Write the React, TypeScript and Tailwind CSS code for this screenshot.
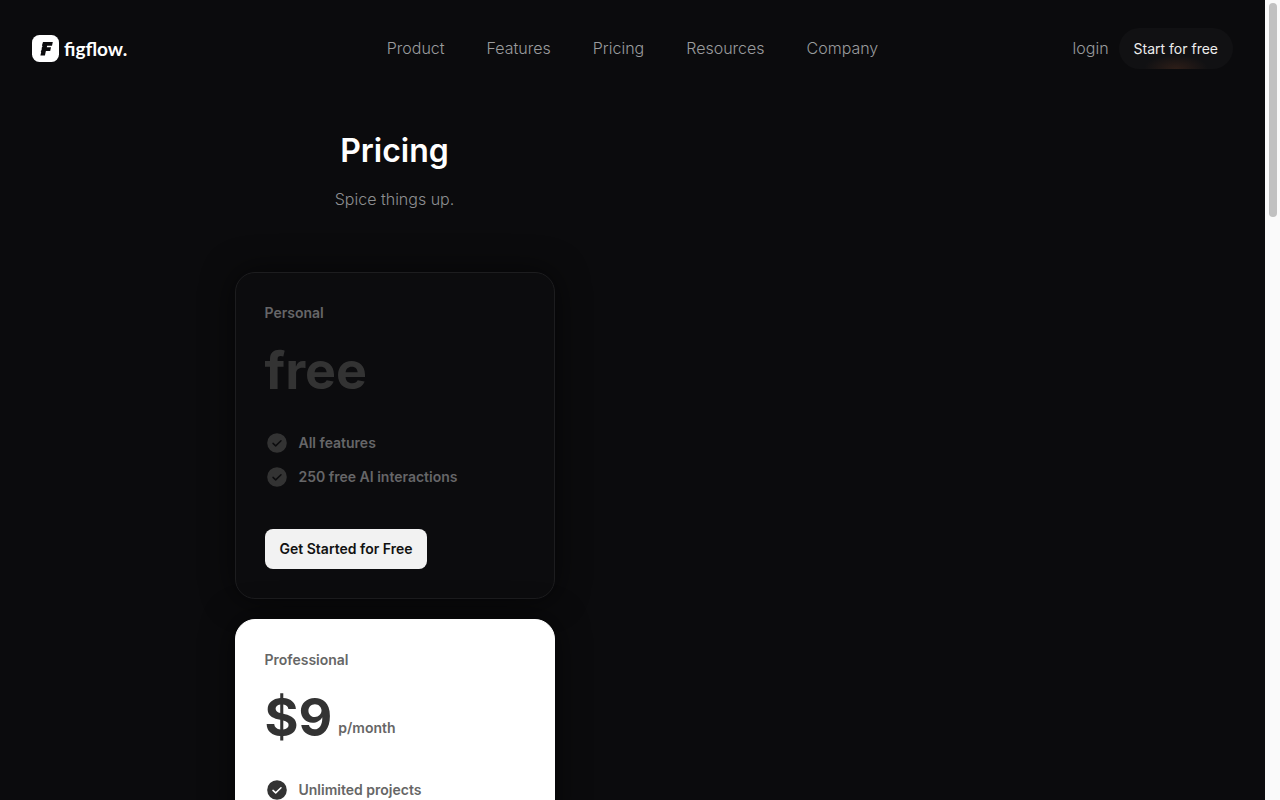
import React from 'react';

const navLinks = ['Product', 'Features', 'Pricing', 'Resources', 'Company'];

interface Plan {
  name: string;
  price: string;
  period?: string;
  features: string[];
  cta?: string;
  featured?: boolean;
}

const plans: Plan[] = [
  {
    name: 'Personal',
    price: 'free',
    features: ['All features', '250 free AI interactions'],
    cta: 'Get Started for Free',
  },
  {
    name: 'Professional',
    price: '$9',
    period: 'p/month',
    features: ['Unlimited projects'],
    featured: true,
  },
];

const Logo = () => (
  <a href="#" className="flex items-center gap-1 text-white">
    <svg width="28" height="28" viewBox="0 0 28 28" aria-hidden="true">
      <rect width="27" height="27" rx="7.5" fill="#fff" />
      <path
        d="M11 7H20.8L20 10.8H15.1L14.8 12.3H19L18.2 16H13.9L12.9 20.5H8.4L9.2 16.9L8.7 16.2L9.6 15L9.8 12.4L10.5 11.4L10 10.2Z"
        fill="#0b0b0d"
      />
    </svg>
    <span className="font-[Lato,sans-serif] text-[19px] font-bold leading-7">figflow.</span>
  </a>
);

const CheckIcon = ({ featured }: { featured?: boolean }) => (
  <svg width="24" height="24" viewBox="0 0 24 24" fill="none" aria-hidden="true" className="shrink-0">
    <circle cx="12" cy="12" r="9.8" fill="#333333" />
    <path
      d="M8 12.4L10.7 14.9L16 9.8"
      stroke={featured ? '#ffffff' : '#0c0c0e'}
      strokeWidth="1.5"
      strokeLinecap="round"
      strokeLinejoin="round"
    />
  </svg>
);

const Header = () => (
  <header className="grid grid-cols-[1fr_auto_1fr] items-center px-8 py-7">
    <Logo />
    <nav className="flex gap-[42px] pb-0.5">
      {navLinks.map((link) => (
        <a key={link} href="#" className="text-base font-light text-[#9a9b9d]">
          {link}
        </a>
      ))}
    </nav>
    <div className="flex items-center justify-end gap-2.5">
      <a href="#" className="pb-0.5 text-base font-light text-[#9a9b9d]">
        login
      </a>
      <button
        type="button"
        className="h-[41px] rounded-full bg-[#111113] bg-[radial-gradient(ellipse_32px_14px_at_50%_100%,#2e1e18,transparent)] px-[15px] text-sm text-[#ededed]"
      >
        Start for free
      </button>
    </div>
  </header>
);

const PlanCard = ({ plan }: { plan: Plan }) => (
  <article
    className={`rounded-[20px] border px-[29px] pt-[30px] pb-[29px] text-sm font-semibold shadow-[0_0_32px_rgba(0,0,0,0.6)] ${
      plan.featured
        ? 'border-white bg-white text-[#666666]'
        : 'border-[#1d1d1f] bg-[#0c0c0e] text-[#666668]'
    }`}
  >
    <h2 className="leading-5">{plan.name}</h2>
    <div className="mt-4 flex items-end gap-1.5">
      <span className="text-[52px] font-bold leading-[64px] text-[#333333]">{plan.price}</span>
      {plan.period && <span className="pb-3 leading-5">{plan.period}</span>}
    </div>
    <ul className="mt-7 flex flex-col gap-2.5">
      {plan.features.map((feature) => (
        <li key={feature} className="flex items-center gap-2.5 leading-6">
          <CheckIcon featured={plan.featured} />
          {feature}
        </li>
      ))}
    </ul>
    {plan.cta && (
      <button type="button" className="mt-10 h-10 rounded-lg bg-[#f2f2f2] px-[15px] text-[#111111]">
        {plan.cta}
      </button>
    )}
  </article>
);

// Vertical scrollbar track with its thumb at the top
const ScrollTrack = () => (
  <div className="w-[15px] shrink-0 bg-[#fafafa] px-1 pt-[3px]">
    <div className="h-[214px] w-2 rounded-full bg-[#c1c1c1]" />
  </div>
);

export default function App() {
  return (
    <div className="flex h-screen overflow-hidden bg-[#0b0b0d] font-[Inter,sans-serif]">
      <div className="min-w-0 flex-1">
        <Header />
        <main className="mx-auto max-w-[796px] pt-8">
          <div className="w-80">
            <div className="text-center">
              <h1 className="text-[32px] font-semibold leading-11 text-white">Pricing</h1>
              <p className="mt-3.5 text-base font-light leading-6 text-[#8e8f91]">Spice things up.</p>
            </div>
            <div className="mt-[61px] flex flex-col gap-5">
              {plans.map((plan) => (
                <PlanCard key={plan.name} plan={plan} />
              ))}
            </div>
          </div>
        </main>
      </div>
      <ScrollTrack />
    </div>
  );
}
